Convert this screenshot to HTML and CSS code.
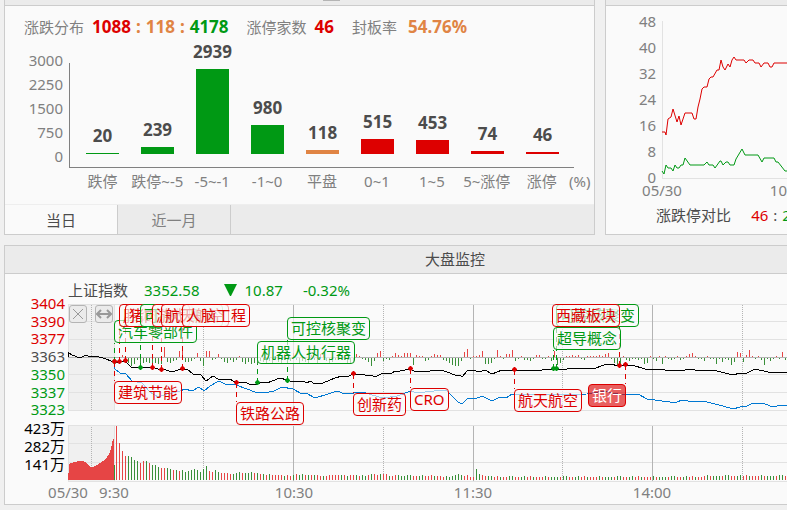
FILE: index.html
```html
<!DOCTYPE html>
<html lang="zh-CN">
<head>
    <meta charset="UTF-8">
    <meta name="viewport" content="width=device-width, initial-scale=1.0">
    <title>大盘监控</title>
    <link rel="stylesheet" href="styles.css">
</head>
<body>

    <div class="top-row">
        <section class="panel">
            <div class="panel-strip"><span class="strip-handle"></span></div>
            <div class="summary">
                <span>涨跌分布</span>
                <b class="ratio"><i class="up">1088</i><i class="flat">:</i><i class="flat">118</i><i class="flat">:</i><i class="down">4178</i></b>
                <span>涨停家数</span>
                <b class="up">46</b>
                <span>封板率</span>
                <b class="flat seal">54.76%</b>
            </div>
            <div class="bar-chart">
                <div class="bar-axis">
                    <span>3000</span><span>2250</span><span>1500</span><span>750</span><span>0</span>
                </div>
                <div class="bars" id="bars"></div>
            </div>
            <div class="bar-names">
                <div class="bar-names-list" id="bar-names"></div>
                <span>(%)</span>
            </div>
            <div class="tabs">
                <button type="button" class="tab active">当日</button>
                <button type="button" class="tab">近一月</button>
            </div>
        </section>

        <section class="panel panel-open">
            <div class="panel-strip"></div>
            <div class="limit-chart">
                <div class="limit-axis">
                    <span>48</span><span>40</span><span>32</span><span>24</span><span>16</span><span>8</span><span>0</span>
                </div>
                <svg class="limit-plot" width="100%" height="180">
                    <path class="grid-line" d="M0.5 0V158M0 157.5H400"/>
                    <polyline class="line-up" points="0,111 3,111 4,114 6,98 9,96 11,88 15,101 17,95 19,104 23,92 30,92 32,98 34,98 36,86 38,78 40,68 42,66 45,66 47,58 49,56 51,56 55,49 57,49 59,39 61,46 63,49 66,43 68,46 70,39 72,36 74,39 82,39 84,42 87,39 91,39 93,42 97,42 99,46 102,42 106,42 108,46 110,46 112,42 180,42"/>
                    <polyline class="line-down" points="0,150 2,153 4,144 6,147 9,147 11,150 13,144 15,147 17,147 19,144 21,144 23,137 28,144 42,144 45,141 47,144 51,144 53,147 58,140 59,140 61,144 64,141 66,141 68,144 72,144 74,138 80,128 83,134 96,134 100,141 102,137 112,137 114,141 116,141 123,150 180,150"/>
                    <text x="0" y="175">05/30</text>
                    <text x="127" y="175">10:30</text>
                </svg>
            </div>
            <div class="limit-foot">
                <span>涨跌停对比</span>
                <span class="limit-ratio"><i class="up">46</i><i>:</i><i class="down">2</i></span>
            </div>
        </section>
    </div>

    <section class="panel monitor">
        <h2>大盘监控</h2>
        <div class="index-info">
            <span class="index-name">上证指数</span>
            <span>3352.58</span>
            <span class="change"><svg width="13" height="12"><path d="M0 0H13L7 12H6Z"/></svg>10.87</span>
            <span>-0.32%</span>
        </div>
        <div class="monitor-body">
            <div class="monitor-axis">
                <div class="price-axis">
                    <span class="up">3404</span><span class="up">3390</span><span class="up">3377</span><span>3363</span><span class="down">3350</span><span class="down">3337</span><span class="down">3323</span>
                </div>
                <div class="volume-axis">
                    <span>423万</span><span>282万</span><span>141万</span>
                </div>
            </div>
            <div class="monitor-plot">
                <svg class="monitor-svg" width="100%" height="200">
                    <rect class="pre-open" x="0" y="0" width="46" height="106"/>
                    <rect class="pre-open" x="0" y="121" width="46" height="56"/>
                    <path class="grid-line" d="M0 .5H900M0 17.5H900M0 35.5H900M0 70.5H900M0 88.5H900M0 106.5H900M0 121.5H900M0 139.5H900M0 158.5H900M0 177.5H900M.5 0V106M.5 121V177M46.5 0V106M46.5 121V177"/>
                    <path class="half-line" d="M23.5 1V106M23.5 123V177M135.5 1V106M135.5 123V177M315.5 1V106M315.5 123V177M494.5 1V106M494.5 123V177M674.5 1V106M674.5 123V177"/>
                    <path class="hour-line" d="M225.5 1V106M225.5 122V177M405.5 1V106M405.5 122V177M584.5 1V106M584.5 122V177"/>
                    <path class="base-line" d="M0 53.5H900"/>
                    <path class="volume-pre" d="M0 176V169H1V160H2V159H5V158H9V157H16V158H18V159H19V160H20V161H21V162H22V163H26V162H28V161H30V160H31V159H33V158H34V157H36V156H37V155H38V154H39V152H40V151H41V149H42V146H43V142H44V137H45V135H46V176Z"/>
                    <g id="ticks"></g>
                    <g id="volumes"></g>
                    <polyline class="line-avg" points="46,59 47,65 52,69 58,70 64,77 74,79 82,88 90,93 99,90 112,87 117,85 124,87 131,83 136,87 142,82 151,77 157,80 168,81 179,85 187,88 192,89 195,88 199,89 203,87 206,87 214,83 225,85 234,90 238,89 247,94 260,90 269,87 277,90 295,88 304,91 315,94 329,92 343,87 349,89 374,86 379,87 390,98 392,99 395,99 400,94 407,95 414,92 424,97 432,93 438,94 444,90 472,91 519,90 535,87 555,91 562,90 570,90 579,95 602,98 609,98 614,96 625,98 628,97 639,98 655,102 665,105 672,103 679,102 685,99 695,99 702,102 709,102 719,101 900,101"/>
                    <polyline class="line-price" points="0,53 0,48 4,51 12,54 18,51 20,52 27,52 35,54 46,58 51,58 57,57 63,63 72,64 84,63 93,66 96,65 103,68 114,65 119,65 125,70 133,71 138,77 145,72 150,75 162,75 168,79 177,78 183,81 189,80 195,78 199,79 212,74 219,76 225,78 235,77 239,79 242,77 247,80 255,79 267,74 274,72 279,73 285,70 290,71 295,70 299,72 303,71 307,73 315,69 323,70 327,67 332,67 342,65 348,68 354,67 362,67 373,66 379,68 387,71 392,71 394,73 400,66 405,66 411,68 417,66 424,70 434,66 446,66 452,67 460,66 462,67 474,66 485,65 499,65 505,64 522,64 525,65 539,60 544,60 549,62 552,61 557,61 564,61 577,65 592,65 597,66 617,66 620,65 627,66 645,66 665,71 672,69 679,69 687,65 700,68 719,69 900,69"/>
                    <g id="links"></g>
                    <text x="0" y="194">05/30</text>
                    <text x="46" y="194">9:30</text>
                    <text x="226" y="194">10:30</text>
                    <text x="405" y="194">11:30</text>
                    <text x="584" y="194">14:00</text>
                </svg>
                <div id="tags"></div>
                <div class="tools">
                    <button type="button" class="tool" aria-label="关闭">
                        <svg width="16" height="16"><path d="M3 3L13 13M13 3L3 13"/></svg>
                    </button>
                    <button type="button" class="tool" aria-label="展开">
                        <svg class="bold" width="16" height="16"><path d="M2 8H14M5 4L1 8L5 12M11 4L15 8L11 12"/></svg>
                    </button>
                </div>
            </div>
        </div>
    </section>

    <script src="script.js"></script>
</body>
</html>
```
FILE: styles.css
```css
* {
    box-sizing: border-box;
}

body {
    margin: 0;
    padding-left: 4px;
    background: #f0f0f0;
    color: #808080;
    font-family: "Noto Sans", "Noto Sans CJK SC", sans-serif;
    font-size: 15px;
    line-height: 18px;
    overflow: hidden;
}

i {
    font-style: normal;
}

button {
    padding: 0;
    font: inherit;
    color: inherit;
    cursor: pointer;
}

text {
    fill: #808080;
    text-anchor: middle;
}

.up {
    color: #d00;
}

.down {
    color: #009914;
}

.flat {
    color: #e08444;
}

.top-row {
    display: grid;
    grid-template-columns: 13fr 4fr;
    gap: 10px;
    margin-bottom: 10px;
}

.panel {
    min-width: 0;
    border: 1px solid #ccc;
    border-top: none;
    background: #fafafa;
    overflow: hidden;
}

.panel-open {
    border-right: none;
}

.panel-strip {
    height: 6px;
    background: #ebebeb;
    border-bottom: 1px solid #ccc;
}

.strip-handle {
    display: block;
    width: 17px;
    height: 1px;
    margin-left: 54%;
    background: #b4b4b4;
}

/* distribution */

.summary {
    display: flex;
    align-items: center;
    height: 24px;
    margin: 9px 0 0 19px;
    white-space: nowrap;
}

.summary b {
    margin: 0 18px 0 8px;
    font-size: 17px;
}

.summary .seal {
    margin-left: 11px;
}

.ratio {
    display: flex;
    gap: 5px;
}

.bar-chart {
    display: flex;
    height: 129px;
}

.bar-axis {
    display: flex;
    flex-direction: column;
    justify-content: flex-end;
    width: 58px;
    margin-right: 6px;
    text-align: right;
}

.bar-axis span {
    line-height: 24px;
}

.bars {
    flex: 1;
    display: grid;
    grid-template-columns: repeat(9, 1fr);
    grid-template-rows: 100%;
    align-items: end;
    height: 105px;
    margin: 24px 20px 0 0;
    padding: 0 4px 13px 5px;
    border-left: 1px solid #808080;
    border-bottom: 1px solid #808080;
}

.bar-item {
    display: flex;
    flex-direction: column;
    align-items: center;
}

.bar-item b {
    margin-bottom: 5px;
    font-size: 17px;
    line-height: 24px;
    color: #4c4c4c;
}

.bar {
    width: 33px;
    background: currentColor;
}

.bar-names {
    display: flex;
    height: 36px;
    padding: 4px 0 0 70px;
    white-space: nowrap;
}

.bar-names > span {
    width: 25px;
}

.bar-names-list {
    flex: 1;
    display: grid;
    grid-template-columns: repeat(9, 1fr);
}

.bar-names-list span {
    display: flex;
    justify-content: center;
    min-width: 0;
}

.tabs {
    display: flex;
    height: 30px;
    border-top: 1px solid #eee;
    background: #ebebeb;
}

.tab {
    width: 113px;
    border: none;
    border-right: 1px solid #ccc;
    background: #ebebeb;
}

.tab.active {
    background: #fafafa;
    color: #4c4c4c;
}

/* limit up / down */

.limit-chart {
    display: flex;
    height: 195px;
    padding-top: 2px;
}

.limit-axis {
    display: flex;
    flex-direction: column;
    width: 50px;
    margin-right: 6px;
    text-align: right;
}

.limit-axis span {
    line-height: 26px;
}

.limit-plot {
    flex: 1;
    min-width: 0;
    margin-top: 13px;
    overflow: visible;
}

.grid-line {
    fill: none;
    stroke: #e2e2e2;
}

polyline {
    fill: none;
    stroke-width: 1;
}

.line-up {
    stroke: #d00;
}

.line-down {
    stroke: #009914;
}

.limit-foot {
    display: flex;
    gap: 20px;
    padding: 5px 0 0 50px;
    color: #4c4c4c;
    white-space: nowrap;
}

.limit-ratio {
    display: flex;
    gap: 5px;
}

/* index monitor, runs past the right edge */

.monitor {
    margin-right: -119px;
    border-top: 1px solid #ccc;
}

.monitor h2 {
    margin: 0;
    border-bottom: 1px solid #ccc;
    background: #ebebeb;
    color: #4c4c4c;
    font-size: 15px;
    font-weight: normal;
    line-height: 27px;
    text-align: center;
}

.index-info {
    display: flex;
    align-items: center;
    gap: 20px;
    height: 30px;
    padding: 4px 0 2px 63px;
    color: #009914;
}

.index-name {
    margin-right: -4px;
    color: #4c4c4c;
}

.change {
    display: flex;
    align-items: center;
    gap: 8px;
    margin-left: 4px;
}

.change path {
    fill: #009914;
}

.monitor-body {
    display: flex;
    height: 200px;
}

.monitor-axis {
    width: 60px;
    margin: -9px 3px 0 0;
    text-align: right;
}

.price-axis {
    display: grid;
    grid-template-rows: repeat(7, 1fr);
    height: 124px;
    color: #4c4c4c;
    line-height: 17px;
}

.volume-axis {
    display: grid;
    color: #000;
}

.monitor-plot {
    flex: 1;
    position: relative;
}

.monitor-svg {
    display: block;
    overflow: visible;
}

.monitor-svg polyline {
    shape-rendering: crispEdges;
}

.pre-open {
    fill: #f0f0f0;
}

.half-line {
    stroke: #b4b4b4;
    stroke-dasharray: 1 1;
}

.hour-line {
    stroke: #b4b4b4;
}

.base-line {
    stroke: #b4b4b4;
}

.volume-pre,
.bar-up {
    fill: #e64545;
}

.bar-down {
    fill: #398f39;
}

.line-avg {
    stroke: #0078d2;
}

.line-price {
    stroke: #000;
}

.link {
    stroke: currentColor;
    stroke-dasharray: 5 4;
}

.dot {
    fill: currentColor;
}

.tag {
    position: absolute;
    height: 23px;
    padding: 0 3px;
    border: 1px solid currentColor;
    border-radius: 4px;
    background: rgba(250, 250, 250, 0.65);
    line-height: 21px;
    white-space: nowrap;
}

.tag.solid {
    border-color: #d00;
    background: rgba(221, 0, 0, 0.62);
    color: #fff;
}

.tools {
    position: absolute;
    top: 1px;
    left: 1px;
    display: flex;
    gap: 8px;
}

.tool {
    width: 18px;
    height: 18px;
    border: 1px solid #b4b4b4;
    border-radius: 3px;
    background: #ebebeb;
}

.tool svg {
    display: block;
    fill: none;
    stroke: #999;
}

.tool .bold {
    stroke-width: 2;
}
```
FILE: script.js
```js
const SVG_NS = 'http://www.w3.org/2000/svg';

// name, count, bar height, class
const distribution = [
    ['跌停', 20, 1, 'down'],
    ['跌停~-5', 239, 7, 'down'],
    ['-5~-1', 2939, 85, 'down'],
    ['-1~0', 980, 29, 'down'],
    ['平盘', 118, 4, 'flat'],
    ['0~1', 515, 15, 'up'],
    ['1~5', 453, 14, 'up'],
    ['5~涨停', 74, 3, 'up'],
    ['涨停', 46, 2, 'up']
];

// text, x, y of the point on the line, top of the tag, class
const events = [
    ['汽车零部件', 46, 58, 16, 'down'],
    ['建筑节能', 46, 58, 77, 'up'],
    ['肝炎概念', 51, 58, 0, 'up'],
    ['猪肉概念', 57, 57, 0, 'up'],
    ['可控核聚变', 72, 64, 0, 'down'],
    ['游戏', 84, 64, 0, 'up'],
    ['航天航空', 93, 66, 0, 'up'],
    ['人脑工程', 114, 65, 0, 'up'],
    ['铁路公路', 168, 79, 98, 'up'],
    ['可控核聚变', 219, 77, 13, 'down'],
    ['机器人执行器', 189, 79, 37, 'down'],
    ['创新药', 285, 70, 89, 'up'],
    ['CRO', 342, 65, 84, 'up'],
    ['航天航空', 446, 66, 85, 'up'],
    ['可控核聚变', 488, 65, 0, 'down'],
    ['超导概念', 485, 65, 23, 'down'],
    ['西藏板块', 551, 62, 0, 'up', 484],
    ['银行', 557, 61, 80, 'up solid', 520]
];

const ticks = [
    0, -3, 2, -3, -5, -8, -6, -2, -5, -5,
    -4, -5, -7, -5, -6, -6, 10, -4, -5, -3,
    -2, 6, 6, -4, -4, -3, -1, 4, -3, -8,
    6, 6, -2, -1, 3, -1, -4, -5, -2, -4,
    -2, 1, -4, -6, -4, -6, -5, -7, -3, -4,
    -5, -3, -6, -2, -4, -6, 3, -5, -3, 4,
    -2, -6, -3, -4, -6, 2, -2, -5, 3, 3,
    -3, -5, -4, -2, -2, 2, 1, -5, -5, -4,
    3, 1, -1, -2, -4, -8, -3, 4, 6, -3,
    -1, -2, 1, 4, 2, 1, 4, 4, 4, -7,
    2, 1, 1, -3, -2, 1, 3, 2, 2, -2,
    -3, -5, -7, -8, -8, -3, 5, 8, -1, 1,
    1, 2, 6, -6, -6, -5, -1, 7, 1, -1,
    3, 3, 7, -3, -1, 1, -2, -2, -3, -1,
    2, 2, -1, -1, 1, -3, 6, -7, -5, -2,
    1, 1, 2, 1, 2, -1, -2, 1, 1, 1,
    1, 2, 1, 3, 4, -1, -5, -7, -7, 1,
    -2, -3, -1, -1, -2, -1, -6, -5, 1, -1,
    -3, 1, -6, 1, -1, -2, -1, 1, -2, -1,
    1, 3, 4, 1, -1, -1, -3, 1, -1, -1,
    -6, -1, -4, -1, -2, -7, -4, 5, 4, -4,
    2, 7, 1, -1, 1, -2, -7, -1, -3, -1,
    1, -1, 5, -2, 1, 1
];

// red volumes are positive, green ones negative
const volumes = [
    54, 37, 29, 24, -24, -23, -20, -19, 17, 19,
    -19, 17, -15, -15, -13, 12, 12, -12, -11, 10,
    -10, 9, -10, -8, -9, -10, -11, -10, -8, -11,
    -14, 9, 8, -10, -8, 7, 7, 7, 6, -6,
    -7, -8, 7, -7, -7, -8, 7, -7, 6, -6,
    5, -6, 5, 5, 5, 5, -4, 5, 4, -5,
    6, -5, -6, 5, -5, 5, -5, 5, 4, -4,
    4, 5, 5, 5, 5, -5, 5, -4, 5, 5,
    -5, 4, -5, -4, 5, -6, 6, 5, -6, 6,
    6, -4, 4, 5, -5, -4, -4, -5, -5, 4,
    4, -4, -5, 4, 4, 5, -4, 4, 4, 3,
    -4, -3, -4, -5, -6, -5, 4, 5, 3, 3,
    -11, -6, 5, 4, -4, -4, 3, 4, -3, 3
];

const volumeTail = [3, -3, 3, -3, 3, 3, -4, -3, 3, -3, 3, -4, 4, 3, -3, 3, -4, -4];

function addShape(parent, name, attrs) {
    const el = document.createElementNS(SVG_NS, name);
    for (const key in attrs) {
        el.setAttribute(key, attrs[key]);
    }
    parent.appendChild(el);
}

function drawDistribution() {
    const bars = document.getElementById('bars');
    const names = document.getElementById('bar-names');

    distribution.forEach(function ([name, count, height, cls]) {
        const item = document.createElement('div');
        item.className = 'bar-item';
        item.innerHTML = `<b>${count}</b><div class="bar ${cls}" style="height: ${height}px"></div>`;
        bars.appendChild(item);

        const label = document.createElement('span');
        label.textContent = name;
        names.appendChild(label);
    });
}

function drawTicks() {
    const group = document.getElementById('ticks');
    ticks.forEach(function (value, i) {
        addShape(group, 'rect', {
            class: value > 0 ? 'bar-up' : 'bar-down',
            x: 48 + i * 3,
            y: value > 0 ? 53 - value : 54,
            width: 1,
            height: Math.abs(value)
        });
    });
}

function drawVolumes() {
    const group = document.getElementById('volumes');
    addShape(group, 'rect', { class: 'bar-down', x: 46, y: 161, width: 1, height: 15 });
    for (let i = 0; i < 230; i++) {
        const late = i > 195 ? 1 : 0;
        const value = i < volumes.length ? volumes[i] : volumeTail[(i * 7) % volumeTail.length];
        const height = Math.abs(value) + late;
        addShape(group, 'rect', {
            class: value > 0 ? 'bar-up' : 'bar-down',
            x: 48 + i * 3,
            y: 176 - height,
            width: 1,
            height: height
        });
    }
}

function drawEvents() {
    const links = document.getElementById('links');
    const tags = document.getElementById('tags');

    events.forEach(function ([text, x, y, top, cls, left]) {
        const edge = top > y ? top : top + 23;
        const color = cls.split(' ')[0];
        addShape(links, 'path', { class: 'link ' + color, d: `M${x + 0.5} ${y}V${edge}` });
        addShape(links, 'path', { class: 'dot ' + color, d: `M${x - 2} ${y - 1}l2 -2h1l2 2v1l-2 2h-1l-2 -2z` });

        const tag = document.createElement('span');
        tag.className = 'tag ' + cls;
        tag.textContent = text;
        tag.style.left = (left === undefined ? x : left) + 'px';
        tag.style.top = top + 'px';
        tags.appendChild(tag);
    });
}

drawDistribution();
drawTicks();
drawVolumes();
drawEvents();
```
